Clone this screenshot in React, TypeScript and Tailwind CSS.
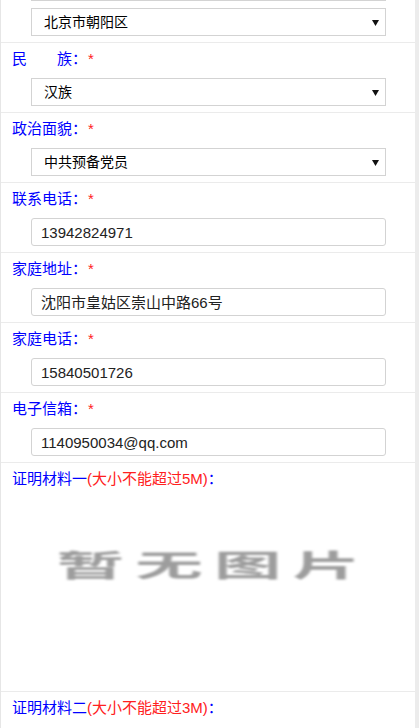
import React from "react";

const FONT = { fontFamily: '"Liberation Sans", "Noto Sans CJK SC", sans-serif' };

function Select({ value, className = "" }: { value?: string; className?: string }) {
  return (
    <div
      className={`ml-[30px] w-[355px] h-[28px] border border-[#d3d3d3] bg-white flex items-center justify-between pl-[12px] pr-[6px] text-[14px] text-black leading-none ${className}`}
    >
      <span>{value}</span>
      <svg width="7" height="6" viewBox="0 0 7 6" className="mt-[1px]">
        <path d="M0 0 H7 L3.5 6 Z" fill="#111" />
      </svg>
    </div>
  );
}

function Input({ value }: { value: string }) {
  return (
    <div className="ml-[30px] w-[355px] h-[28px] border border-[#d3d3d3] rounded-[3px] bg-white flex items-center pl-[9px] text-[15px] text-[#222] leading-none">
      {value}
    </div>
  );
}

function Label({ children, required = true }: { children: React.ReactNode; required?: boolean }) {
  return (
    <div className="pl-[11px] h-[20px] leading-[20px] text-[15px] text-[#0000ff] whitespace-nowrap">
      {children}
      {required && <span className="text-[#ff2020] ml-[1px]">*</span>}
    </div>
  );
}

function Row({ label, children }: { label: React.ReactNode; children: React.ReactNode }) {
  return (
    <div className="pt-[6px] pb-[6px] border-b border-[#ebebeb]">
      <Label>{label}</Label>
      <div className="mt-[9px]">{children}</div>
    </div>
  );
}

export default function App() {
  return (
    <div className="w-[419px] h-[728px] overflow-hidden bg-white" style={FONT}>
      <div className="h-full border-l border-[#e6e6e6] border-r-4 border-r-[#ececec]">
        <div className="flex flex-col gap-[7px] pb-[6px] border-b border-[#ebebeb]">
          <Select className="mt-[-27px]" />
          <Select value="北京市朝阳区" />
        </div>
        <Row label="民　　族：">
          <Select value="汉族" />
        </Row>
        <Row label="政治面貌：">
          <Select value="中共预备党员" />
        </Row>
        <Row label="联系电话：">
          <Input value="13942824971" />
        </Row>
        <Row label="家庭地址：">
          <Input value="沈阳市皇姑区崇山中路66号" />
        </Row>
        <Row label="家庭电话：">
          <Input value="15840501726" />
        </Row>
        <Row label="电子信箱：">
          <Input value="1140950034@qq.com" />
        </Row>
        <div className="pt-[6px] border-b border-[#ebebeb]">
          <div className="pl-[11px] h-[20px] leading-[20px] text-[15px] text-[#0000ff] whitespace-nowrap">
            证明材料一<span className="text-[#ff2020]">(大小不能超过5M)</span>：
          </div>
          <div className="h-[202px] flex justify-center pt-[59px] pl-[12px]">
            <span
              className="inline-block h-[30px] text-[30px] leading-[30px] font-bold text-[#9d9d9d] tracking-[5px] scale-x-[2.25] blur-[0.8px] whitespace-nowrap"
              style={{ fontFamily: '"Noto Sans CJK SC", sans-serif' }}
            >
              暂无图片
            </span>
          </div>
        </div>
        <div className="pt-[6px]">
          <div className="pl-[11px] h-[20px] leading-[20px] text-[15px] text-[#0000ff] whitespace-nowrap">
            证明材料二<span className="text-[#ff2020]">(大小不能超过3M)</span>：
          </div>
        </div>
      </div>
    </div>
  );
}
